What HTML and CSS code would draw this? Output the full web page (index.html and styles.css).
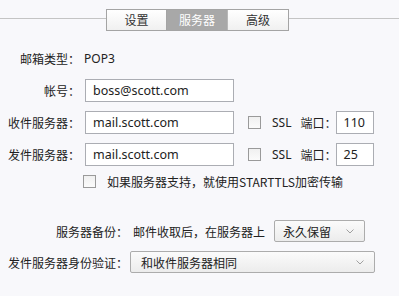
FILE: index.html
```html
<!DOCTYPE html>
<html lang="zh-CN">
<head>
    <meta charset="UTF-8">
    <meta name="viewport" content="width=device-width, initial-scale=1.0">
    <title>服务器</title>
    <link rel="stylesheet" href="styles.css">
</head>
<body>
    <div class="tab-bar">
        <div class="tab-line tab-line-left"></div>
        <div class="tabs">
            <div class="tab">设置</div>
            <div class="tab active">服务器</div>
            <div class="tab">高级</div>
        </div>
        <div class="tab-line"></div>
    </div>

    <div class="form">
        <div class="row row-info">
            <label class="label">邮箱类型：</label>
            <span class="value">POP3</span>
        </div>
        <div class="row">
            <label class="label">帐号：</label>
            <input type="text" class="field" value="boss@scott.com">
        </div>
        <div class="row">
            <label class="label">收件服务器：</label>
            <input type="text" class="field" value="mail.scott.com">
            <input type="checkbox" class="check check-ssl">
            <span class="ssl">SSL</span>
            <span class="port-label">端口：</span>
            <input type="text" class="field port" value="110">
        </div>
        <div class="row">
            <label class="label">发件服务器：</label>
            <input type="text" class="field" value="mail.scott.com">
            <input type="checkbox" class="check check-ssl">
            <span class="ssl">SSL</span>
            <span class="port-label">端口：</span>
            <input type="text" class="field port" value="25">
        </div>
        <div class="row row-tls">
            <input type="checkbox" class="check">
            <span class="tls-text">如果服务器支持，就使用STARTTLS加密传输</span>
        </div>

        <div class="row row-backup">
            <label class="label label-wide">服务器备份：</label>
            <span class="backup-text">邮件收取后，在服务器上</span>
            <div class="select select-short">
                <span>永久保留</span>
                <svg class="arrow" width="8" height="5" viewBox="0 0 8 5"><path d="M0.5 0.5 L4 4 L7.5 0.5" fill="none" stroke="#a0a0a0" stroke-width="1"/></svg>
            </div>
        </div>
        <div class="row row-auth">
            <label class="label label-wide">发件服务器身份验证：</label>
            <div class="select select-long">
                <span>和收件服务器相同</span>
                <svg class="arrow" width="8" height="5" viewBox="0 0 8 5"><path d="M0.5 0.5 L4 4 L7.5 0.5" fill="none" stroke="#a0a0a0" stroke-width="1"/></svg>
            </div>
        </div>
    </div>
</body>
</html>
```

FILE: styles.css
```css
body {
    margin: 0;
    background: #f8f8fb;
    color: #222;
    font-family: "Noto Sans", "Noto Sans CJK SC", sans-serif;
    font-size: 12px;
}

.tab-bar {
    display: flex;
    align-items: center;
    margin-top: 9px;
    height: 22px;
}
.tab-line { flex: 1; height: 1px; background: #c4c4c4; margin-top: -3px; }
.tab-line-left { flex: 0 0 106px; }
.tabs {
    display: flex;
    border: 1px solid #a4a4a4;
    height: 20px;
}
.tab {
    width: 60px;
    line-height: 20px;
    text-align: center;
    font-family: "Noto Sans CJK SC", sans-serif;
    color: #333;
    background: linear-gradient(#ffffff, #f0f0f0);
    border-left: 1px solid #b8b8b8;
}
.tab:first-child { border-left: none; width: 59px; }
.tab.active { background: #a8a8a8; color: #fff; border-left-color: #a4a4a4; }

.form { padding-top: 17px; }

.row {
    display: flex;
    align-items: center;
    height: 23px;
    margin-bottom: 9px;
}
.row-info { height: 20px; margin-bottom: 11px; }

.label {
    width: 80px;
    text-align: right;
    flex-shrink: 0;
    font-family: "Noto Sans CJK SC", sans-serif;
}
.value { margin-left: 4px; }

.field {
    box-sizing: border-box;
    width: 149px;
    height: 23px;
    margin: 0 0 0 5px;
    padding: 0 0 0 7px;
    border: 1px solid #abadb3;
    background: #fff;
    color: #222;
    font-family: "Noto Sans", sans-serif;
    font-size: 12.5px;
    outline: none;
}
.field.port { width: 38px; margin-left: 0; padding-left: 6px; }

.check {
    appearance: none;
    -webkit-appearance: none;
    width: 13px;
    height: 13px;
    margin: 0;
    border: 1px solid #9a9a9a;
    background: linear-gradient(#f0f0f0, #fbfbfb);
    flex-shrink: 0;
}
.check-ssl { margin-left: 14px; }
.ssl { margin-left: 11px; }
.port-label { margin-left: 9px; font-family: "Noto Sans CJK SC", sans-serif; }

.row-tls { height: 16px; margin-top: -2px; padding-left: 83px; }
.tls-text { margin-left: 11px; font-family: "Noto Sans CJK SC", sans-serif; }

.row-backup { height: 22px; margin-top: 31px; }
.row-auth { height: 22px; }
.label-wide { width: 128px; }
.backup-text { margin-left: 5px; font-family: "Noto Sans CJK SC", sans-serif; }

.select {
    box-sizing: border-box;
    display: flex;
    align-items: center;
    justify-content: space-between;
    height: 22px;
    padding: 0 10px 0 8px;
    border: 1px solid #acacac;
    border-radius: 2px;
    background: linear-gradient(#fbfbfb, #ececec);
    font-family: "Noto Sans CJK SC", sans-serif;
}
.select-short { width: 91px; margin-left: 9px; }
.select-long { width: 245px; margin-left: 2px; padding-left: 10px; }
.arrow { display: block; }
```
